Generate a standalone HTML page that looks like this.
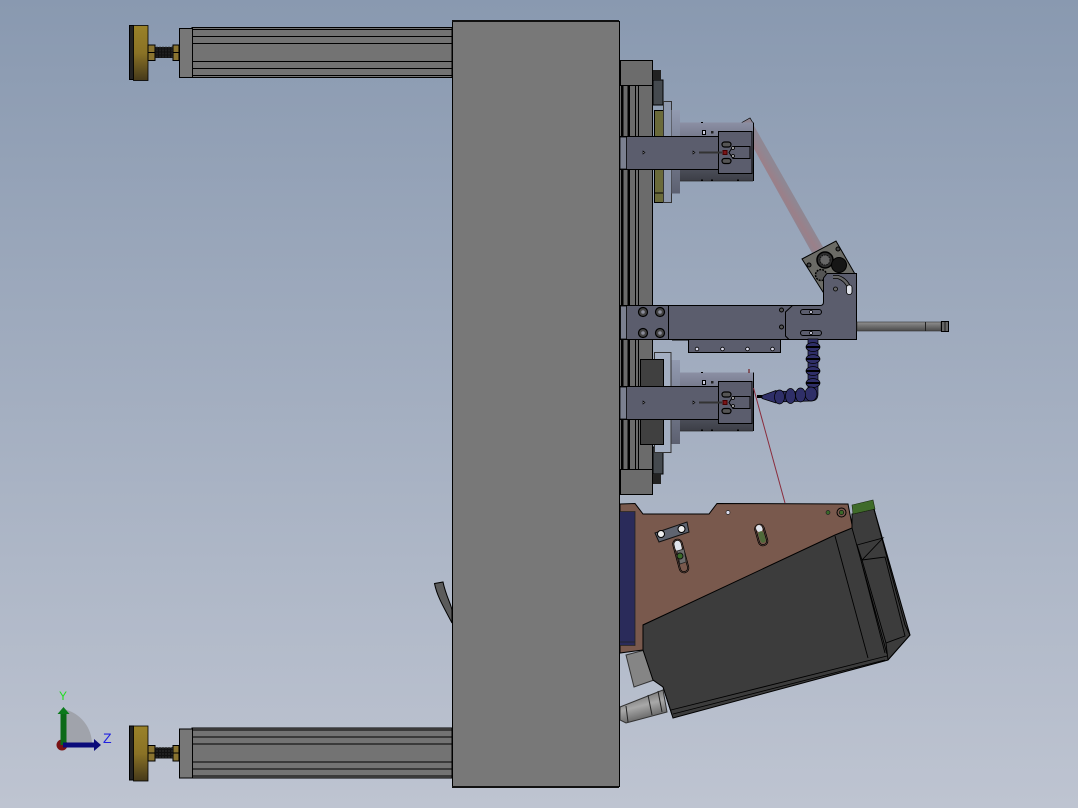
<!DOCTYPE html>
<html><head><meta charset="utf-8"><title>CAD view</title>
<style>html,body{margin:0;padding:0;width:1078px;height:808px;overflow:hidden}svg{display:block}</style></head>
<body>
<svg xmlns="http://www.w3.org/2000/svg" width="1078" height="808" viewBox="0 0 1078 808" font-family="'Liberation Sans',sans-serif">
<defs>
<linearGradient id="bg" x1="0" y1="0" x2="0" y2="1"><stop offset="0" stop-color="#8999b0"/><stop offset="1" stop-color="#bec4d1"/></linearGradient>
<linearGradient id="gold" x1="0" y1="0" x2="0" y2="1"><stop offset="0" stop-color="#9a8228"/><stop offset=".5" stop-color="#8a7226"/><stop offset="1" stop-color="#45391a"/></linearGradient>
<linearGradient id="motor" x1="0" y1="0" x2="0" y2="1"><stop offset="0" stop-color="#8b8fa4"/><stop offset=".5" stop-color="#636675"/><stop offset="1" stop-color="#3c3e46"/></linearGradient>
<linearGradient id="flange" x1="0" y1="0" x2="0" y2="1"><stop offset="0" stop-color="#929ab0"/><stop offset="1" stop-color="#5c6070"/></linearGradient>
<linearGradient id="cyl" gradientUnits="userSpaceOnUse" x1="640" y1="695" x2="646" y2="718"><stop offset="0" stop-color="#7a7a7a"/><stop offset=".45" stop-color="#a8a8a8"/><stop offset="1" stop-color="#6a6a6a"/></linearGradient>
<linearGradient id="rod" x1="0" y1="0" x2="0" y2="1"><stop offset="0" stop-color="#8f8f8f"/><stop offset="1" stop-color="#4a4a4a"/></linearGradient>
<linearGradient id="hose" gradientUnits="userSpaceOnUse" x1="775" y1="197" x2="788" y2="189"><stop offset="0" stop-color="#8a8694"/><stop offset=".5" stop-color="#9b8089"/><stop offset="1" stop-color="#8f8793"/></linearGradient>

<g id="act">
<rect x="192" y="27.500" width="260" height="50" fill="#737373" stroke="#000"/>
<path d="M192 29.500H452M192 36.500H452M192 43.500H452M192 61.500H452M192 68.500H452M192 75.500H452" stroke="#000" fill="none"/>
<rect x="179.500" y="28.500" width="13" height="49" fill="#777" stroke="#000"/>
<rect x="129.500" y="25.500" width="4" height="54" fill="#222" stroke="#000"/>
<rect x="133.500" y="25.500" width="14.500" height="55" fill="url(#gold)" stroke="#000" stroke-width=".8"/>
<rect x="148" y="45" width="7" height="15.500" fill="#8a7430" stroke="#000"/>
<rect x="173" y="45" width="6" height="15.500" fill="#8a7430" stroke="#000"/>
<path d="M148 52.500H155M173 52.500H179" stroke="#000"/>
<rect x="155" y="47" width="18" height="11" fill="#111"/>
<path d="M157 46.500V58.500M160 46.500V58.500M163 46.500V58.500M166 46.500V58.500M169 46.500V58.500M172 46.500V58.500" stroke="#2e2e2e" stroke-dasharray="2 1"/>
</g>

<g id="armUnit" stroke="#000">
<rect x="680" y="122.500" width="73" height="58.500" fill="url(#motor)" stroke="none"/>
<path d="M680 181H753" stroke="#2a2a2a" stroke-width=".8"/>
<path d="M702 122v1M702 181v-1.500M712 181v-1.500M738 181v-1.500" stroke="#000" stroke-width="2"/>
<rect x="702.500" y="130.500" width="3" height="4" fill="#ccd" stroke-width="1"/>
<rect x="711" y="131" width="2.500" height="2.500" fill="#222" stroke="none"/>
<rect x="620.500" y="136.500" width="98" height="33" fill="#5b5d6d"/>
<rect x="620" y="137" width="6.500" height="32" fill="#7b8090" stroke-width=".8"/>
<rect x="718.500" y="131.500" width="33.500" height="42" fill="#5b5d6d"/>
<path d="M699 152.500H722" stroke="#333" stroke-width="2"/>
<rect x="723" y="150.500" width="4" height="4" fill="#7a1518" stroke="#400" stroke-width="1"/>
<path d="M729 152.500L733 146.500H750V158.500H733Z" fill="none"/>
<rect x="722" y="142" width="9" height="5" rx="2.500" fill="#555" stroke-width="1.200"/>
<rect x="722" y="158.500" width="9" height="5" rx="2.500" fill="#555" stroke-width="1.200"/>
<circle cx="733" cy="148" r="1.500" fill="#aaa" stroke-width=".8"/><circle cx="733" cy="156" r="1.500" fill="#aaa" stroke-width=".8"/>
<path d="M643 151l2 1.500-2 1.500zM693 151l2 1.500-2 1.500z" fill="#999" stroke-width=".6"/>
<path d="M753.500 122.500V181" stroke-width="1"/>
</g>
</defs>

<rect width="1078" height="808" fill="url(#bg)"/>

<!-- actuators -->
<use href="#act"/>
<use href="#act" y="700.500"/>

<!-- cable left -->
<path d="M434.500 583.500L443 582C446 596 451 604 452 610V623C443 606 437 596 434.500 583.500Z" fill="#5b5b5b" stroke="#000"/>

<!-- rails -->
<rect x="620" y="85" width="32.500" height="390" fill="#6b6b6b"/>
<rect x="621" y="85" width="2.500" height="390" fill="#000"/>
<rect x="627.500" y="85" width="2.500" height="390" fill="#000"/>
<path d="M635.500 85V470M638.500 85V470M652.500 60V494" stroke="#000"/>
<rect x="620.500" y="60.500" width="32" height="25" fill="#6c6c6c" stroke="#000"/>
<rect x="620.500" y="469.500" width="32" height="25" fill="#6c6c6c" stroke="#000"/>
<rect x="653" y="80" width="10" height="25" fill="#454a4f" stroke="#000"/>
<rect x="653" y="70" width="8" height="10" fill="#222"/>
<rect x="653" y="447" width="10" height="27" fill="#454a4f" stroke="#000"/>
<rect x="653" y="474" width="8" height="10" fill="#222"/>

<!-- upper mount -->
<rect x="654.500" y="110.500" width="9" height="92" fill="#6a6a3a" stroke="#000"/>
<path d="M654 193H663" stroke="#000"/>
<rect x="663.500" y="101.500" width="8" height="101" fill="#8d98ad" stroke="#333"/>
<rect x="671.500" y="110" width="8.500" height="83.500" fill="url(#flange)"/>
<path d="M741 123l9-5 3 5z" fill="#8f8490" stroke="#000" stroke-width=".7"/>

<!-- pink hose -->
<polygon points="753,124 823,247 812,253 753,147" fill="url(#hose)"/>

<!-- lower mount -->
<rect x="654.500" y="352.500" width="16.500" height="100" fill="#a4afc2" stroke="#333"/>
<rect x="671.500" y="360" width="8.500" height="84" fill="url(#flange)"/>
<rect x="640.500" y="359.500" width="23" height="27" fill="#404040" stroke="#000"/>
<rect x="640.500" y="419.500" width="23" height="25" fill="#404040" stroke="#000"/>

<!-- arm units -->
<use href="#armUnit"/>
<use href="#armUnit" y="250"/>
<path d="M749 369v4" stroke="#600" stroke-width="1"/>

<!-- head block -->
<polygon points="802,259 836,241 855,274 823,292" fill="#6b6b66" stroke="#000"/>
<circle cx="825" cy="260" r="8" fill="#2e2e2e" stroke="#000" stroke-width="1.500"/>
<circle cx="825" cy="260" r="5" fill="#666" stroke="#111" stroke-dasharray="1.500 1"/>
<circle cx="839" cy="265" r="7.500" fill="#161616" stroke="#000"/>
<circle cx="821" cy="275" r="5.500" fill="#555" stroke="#000" stroke-width="1.500" stroke-dasharray="2 1"/>
<circle cx="809" cy="265" r="2" fill="#444" stroke="#000"/>
<circle cx="838" cy="249" r="2" fill="#444" stroke="#000"/>

<!-- L bracket -->
<path d="M620.500 305.500H820Q823.500 305.500 823.500 302V278L827 273.500H856.500V339.500H620.500Z" fill="#5b5d6d" stroke="#000"/>
<rect x="620.500" y="306" width="6" height="33" fill="#7b8090" stroke-width=".8" stroke="#000"/>
<path d="M789 339.500l-3.500-3.500V312l7-6.500" fill="none" stroke="#000"/>
<path d="M668.500 305.500V339" stroke="#000"/>
<g fill="#444" stroke="#000" stroke-width="1.200">
<circle cx="643" cy="312" r="4.500"/><circle cx="660" cy="312" r="4.500"/><circle cx="643" cy="333" r="4.500"/><circle cx="660" cy="333" r="4.500"/></g>
<g fill="#8a8c9a"><circle cx="643" cy="312" r="1.800"/><circle cx="660" cy="312" r="1.800"/><circle cx="643" cy="333" r="1.800"/><circle cx="660" cy="333" r="1.800"/></g>
<g fill="#5b5d6d" stroke="#000"><rect x="800.500" y="309.500" width="21" height="5" rx="2.500"/><rect x="800.500" y="330.500" width="21" height="5" rx="2.500"/></g>
<circle cx="811" cy="312" r="1.500" fill="#ccd" stroke="#000" stroke-width=".7"/><circle cx="811" cy="333" r="1.500" fill="#ccd" stroke="#000" stroke-width=".7"/>
<circle cx="781.500" cy="310" r="2" fill="#555" stroke="#000"/><circle cx="781.500" cy="327" r="2" fill="#555" stroke="#000"/>
<path d="M833 277H838Q847 280 850 290" fill="none" stroke="#000" stroke-width="4"/>
<path d="M833 277H838Q847 280 850 290" fill="none" stroke="#666" stroke-width="2.500"/>
<rect x="846.500" y="285" width="5.500" height="9.500" rx="2.500" fill="#dde0e8" stroke="#000" stroke-width=".8"/>
<circle cx="835.500" cy="289" r="2" fill="#666" stroke="#000" stroke-width=".8"/>
<rect x="857" y="322" width="84" height="9" fill="url(#rod)" stroke="#333" stroke-width=".6"/>
<path d="M925.500 322V331" stroke="#222"/>
<rect x="941.500" y="321.500" width="7" height="10" fill="#666" stroke="#000"/>
<path d="M945 321.500V331.500" stroke="#000" stroke-width=".7"/>

<!-- lower plate -->
<rect x="688.500" y="339.500" width="92" height="13" fill="#5b5d6d" stroke="#000"/>
<rect x="672" y="339" width="17" height="1.500" fill="#000"/>
<g fill="#dde" stroke="#000" stroke-width=".8"><circle cx="697" cy="349" r="1.800"/><circle cx="722.500" cy="349" r="1.800"/><circle cx="747.500" cy="349" r="1.800"/><circle cx="772.500" cy="349" r="1.800"/></g>

<!-- flex hose -->
<g fill="#2f2f68" stroke="#000" stroke-width=".7">
<path d="M808 339H818V394Q818 401 811 401L775 402V391L808 392Z"/>
<path d="M776 390.500L762 395.500V398.500L776 403Z"/>
<ellipse cx="813" cy="347" rx="7" ry="4.500"/><ellipse cx="813" cy="359" rx="7" ry="4.500"/><ellipse cx="813" cy="371" rx="7" ry="4.500"/><ellipse cx="813" cy="383" rx="7" ry="4.500"/>
<ellipse cx="811" cy="394" rx="6" ry="7"/><ellipse cx="800.500" cy="395" rx="5" ry="7"/><ellipse cx="790.500" cy="396" rx="5" ry="7.500"/><ellipse cx="779.500" cy="397" rx="5" ry="7"/>
</g>
<path d="M806 347H820M806 359H820M806 371H820M806 383H820" stroke="#000" stroke-width="2"/>
<path d="M757 396.500h5" stroke="#000" stroke-width="3"/>

<!-- red line -->
<path d="M753.500 388L785 503" stroke="#8a2c3c" fill="none"/>

<!-- connectors below motor -->
<polygon points="626,655 645,650 654,680 634,687" fill="#858585" stroke="#333"/>
<polygon points="620,707 663,690 667,712 626,723 620,720" fill="url(#cyl)" stroke="#333"/>
<path d="M648 695l4 20M658 691l4 21M626 706l2 16" stroke="#222"/>

<!-- brown plate -->
<polygon points="620,504 635,503.500 643,514 709,514 717,503.500 848,504 853,530 643,625 643,650 620,653" fill="#79594d" stroke="#000"/>
<rect x="620" y="512" width="15" height="133" fill="#2a2b5a"/>
<path d="M620 511.500H635V645.500H620M620 642H635" fill="none" stroke="#222" stroke-width=".8"/>

<!-- slots -->
<polygon points="655,533 687,522 689,532 659,542" fill="#5f6470" stroke="#111"/>
<circle cx="661" cy="534" r="3.500" fill="#eee" stroke="#000"/><circle cx="681.500" cy="529" r="3.500" fill="#eee" stroke="#000"/>
<g fill="none" stroke-linecap="round">
<path d="M677.500 544L684 568" stroke="#000" stroke-width="10.500"/>
<path d="M677.500 544L684 568" stroke="#79594d" stroke-width="9"/>
<path d="M677.500 544L684 568" stroke="#000" stroke-width="8"/>
<path d="M677.500 544L684 568" stroke="#79594d" stroke-width="6.500"/>
<path d="M677.500 544L678.500 548" stroke="#dfe4ec" stroke-width="6.500"/>
<path d="M759.500 529L763 541" stroke="#000" stroke-width="10.500"/>
<path d="M759.500 529L763 541" stroke="#79594d" stroke-width="9"/>
<path d="M759.500 529L763 541" stroke="#000" stroke-width="8"/>
<path d="M759.500 529L763 541" stroke="#79594d" stroke-width="6.500"/>
<path d="M759 528L759.500 529" stroke="#dfe4ec" stroke-width="6"/>
<path d="M761 534L763 540" stroke="#4f6a3a" stroke-width="5.500"/>
</g>
<path d="M677 551L684 549L686 562L680 564Z" fill="#6c6c6c" stroke="#222" stroke-width=".7"/>
<circle cx="680" cy="556" r="3" fill="#3a6a28" stroke="#111"/>
<circle cx="728" cy="512.500" r="2" fill="#dde" stroke="#222" stroke-width=".7"/>
<circle cx="828" cy="512.500" r="2" fill="#3a6a28" stroke="#222" stroke-width=".7"/>
<circle cx="841.500" cy="512.500" r="4.500" fill="#79594d" stroke="#000"/><circle cx="841.500" cy="512.500" r="2.200" fill="#3a6a28" stroke="#111" stroke-width=".7"/>

<!-- motor -->
<polygon points="643,625 835,535 852,528 852,514 874,509 910,635 888,660 673,718 663,687 653,680 643,650" fill="#3c3c3c" stroke="#000"/>
<polygon points="852,505 873,500 875,509 853,514" fill="#3f6b2a" stroke="#1a2a10" stroke-width=".6"/>
<g fill="none" stroke="#000" stroke-width=".9">
<path d="M835 536L868 658M852 528L887 654M857 545L885 653"/>
<path d="M857 545L883 538L862 560Z"/>
<path d="M862 560L885 557L905 636L886 643Z"/>
<path d="M874 509L905 625L910 635L888 660M886 643L888 660"/>
<path d="M671 710L887 656M673 714L885 660"/>
<path d="M663 687L672 715"/>
</g>

<!-- main block -->
<rect x="452.500" y="21.500" width="167" height="765" fill="#787878" stroke="#000"/>
<rect x="452" y="20" width="167" height="2" fill="#111"/>
<rect x="452" y="786" width="167" height="2" fill="#111"/>

<!-- triad -->
<path d="M63 745V709A36 36 0 0 1 92 745Z" fill="#a0a3ab"/>
<circle cx="62" cy="745" r="5.500" fill="#7a1214"/>
<rect x="60.500" y="714" width="6" height="31" fill="#0c6a18"/>
<polygon points="63.500,707 69.500,714 57.500,714" fill="#0c7a1c"/>
<rect x="63" y="742.500" width="31" height="5" fill="#0b0b7a"/>
<polygon points="101,745 94,739 94,751" fill="#0b0b7a"/>
<text x="59" y="700" font-size="12" fill="#22dd22">Y</text>
<text x="103" y="743" font-size="14" fill="#2020e0">Z</text>
</svg>
</body></html>
